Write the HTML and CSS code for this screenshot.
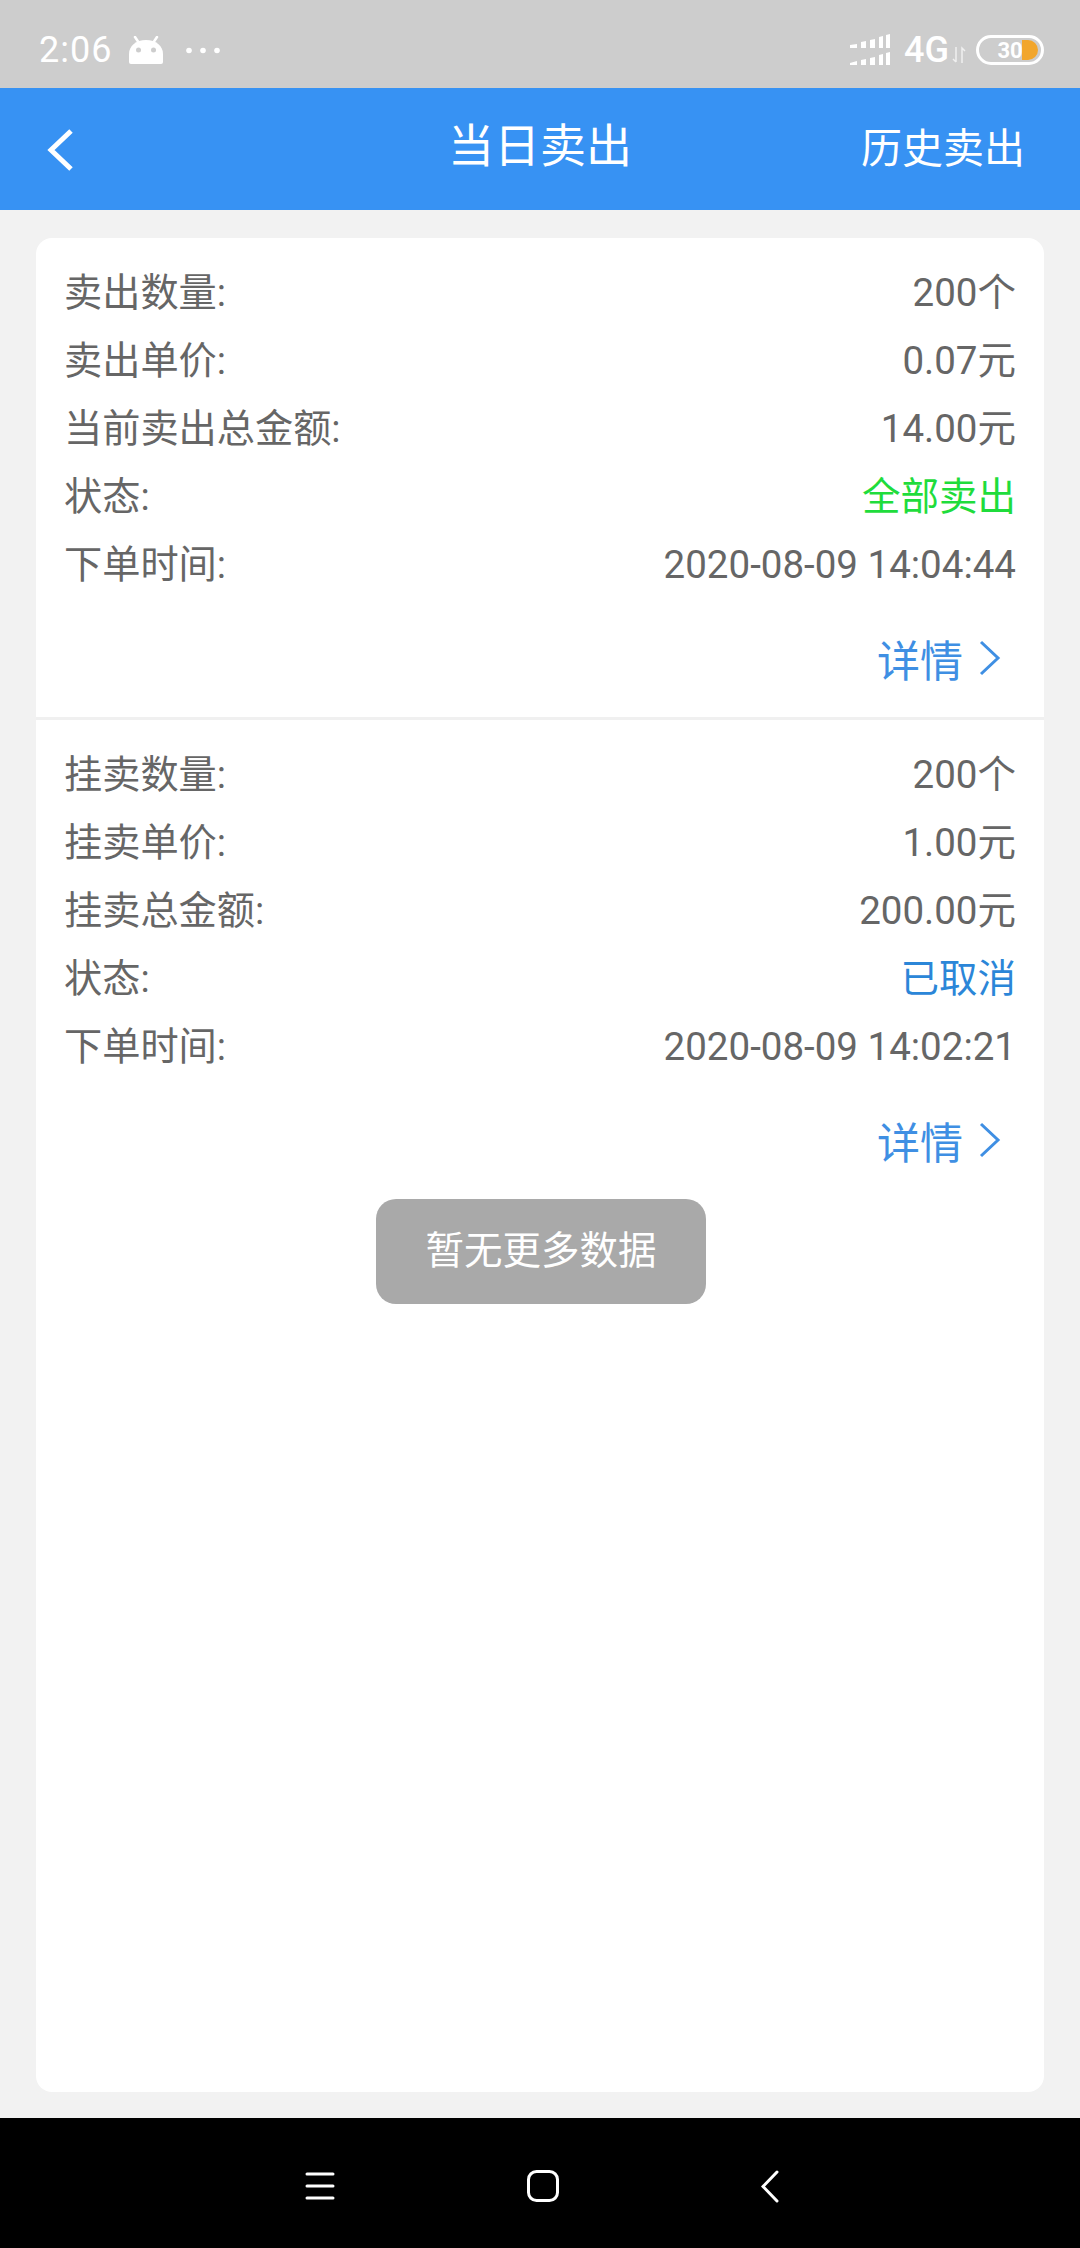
FILE: index.html
```html
<!DOCTYPE html>
<html lang="zh">
<head>
    <meta charset="UTF-8">
    <meta name="viewport" content="width=device-width, initial-scale=1.0">
    <title>当日卖出</title>
    <link rel="stylesheet" href="styles.css">
</head>
<body>
    <div class="status-bar">
        <div class="status-left">
            <span class="clock">2:06</span>
            <svg class="android" width="34" height="28" viewBox="0 0 34 28">
                <path d="M0 26V18C0 10 7 4 17 4s17 6 17 14v8a2 2 0 0 1-2 2H2a2 2 0 0 1-2-2z" fill="#fff"/>
                <path d="M6 1l4 6M28 1l-4 6" stroke="#fff" stroke-width="2.500" stroke-linecap="round"/>
                <circle cx="9.500" cy="14" r="2.500" fill="#cdcdcd"/>
                <circle cx="24.500" cy="14" r="2.500" fill="#cdcdcd"/>
            </svg>
            <svg class="dots" width="34" height="7" viewBox="0 0 34 7">
                <circle cx="3" cy="3.500" r="2.800" fill="#fff"/>
                <circle cx="17" cy="3.500" r="2.800" fill="#fff"/>
                <circle cx="31" cy="3.500" r="2.800" fill="#fff"/>
            </svg>
        </div>
        <div class="status-right">
            <svg width="40" height="32" viewBox="0 0 40 32" fill="#fff">
                <path d="M0 11l7-1v4H0zM11 8l5-1v7h-5zM20 6l5-1v9h-5zM29 3l4-1v12h-4zM36 1l4-1v14h-4z"/>
                <path d="M0 29l7-2v4H0zM11 26l5-1v6h-5zM20 24l5-1v8h-5zM29 21l4-1v11h-4zM36 19l4-1v13h-4z"/>
            </svg>
            <span class="network">4G</span>
            <svg class="updown" width="14" height="18" viewBox="0 0 14 18" fill="none" stroke="#fff" stroke-width="1.500" opacity="0.7">
                <path d="M4 1v15M1 13l3 3M10 17V2l3 3"/>
            </svg>
            <div class="battery">
                <span class="battery-fill"></span>
                <span class="battery-num">30</span>
            </div>
        </div>
    </div>

    <div class="header">
        <svg class="back" width="28" height="42" viewBox="0 0 28 42" fill="none" stroke="#fff" stroke-width="5">
            <path d="M25 2L5 21l20 19"/>
        </svg>
        <span class="title">当日卖出</span>
        <span class="history">历史卖出</span>
    </div>

    <div class="content">
        <div class="card">
            <div class="order">
                <div class="row"><span>卖出数量:</span><span>200个</span></div>
                <div class="row"><span>卖出单价:</span><span>0.07元</span></div>
                <div class="row"><span>当前卖出总金额:</span><span>14.00元</span></div>
                <div class="row"><span>状态:</span><span class="done">全部卖出</span></div>
                <div class="row"><span>下单时间:</span><span>2020-08-09 14:04:44</span></div>
                <div class="detail">
                    <span>详情</span>
                    <svg width="22" height="36" viewBox="0 0 22 36" fill="none" stroke="#3f8fe3" stroke-width="3"><path d="M2 2l17 16L2 34"/></svg>
                </div>
            </div>
            <div class="order">
                <div class="row"><span>挂卖数量:</span><span>200个</span></div>
                <div class="row"><span>挂卖单价:</span><span>1.00元</span></div>
                <div class="row"><span>挂卖总金额:</span><span>200.00元</span></div>
                <div class="row"><span>状态:</span><span class="cancelled">已取消</span></div>
                <div class="row"><span>下单时间:</span><span>2020-08-09 14:02:21</span></div>
                <div class="detail">
                    <span>详情</span>
                    <svg width="22" height="36" viewBox="0 0 22 36" fill="none" stroke="#3f8fe3" stroke-width="3"><path d="M2 2l17 16L2 34"/></svg>
                </div>
            </div>
            <div class="toast">暂无更多数据</div>
        </div>
    </div>

    <div class="nav-bar">
        <svg class="nav-menu" width="30" height="30" viewBox="0 0 30 30" stroke="#fff" stroke-width="3" stroke-linecap="round">
            <path d="M2 3h26M2 15h26M2 27h26"/>
        </svg>
        <svg class="nav-home" width="32" height="32" viewBox="0 0 32 32" fill="none" stroke="#fff" stroke-width="3">
            <rect x="1.500" y="1.500" width="29" height="29" rx="8"/>
        </svg>
        <svg width="18" height="33" viewBox="0 0 18 33" fill="none" stroke="#fff" stroke-width="3" stroke-linecap="round">
            <path d="M16 2L2 16.500 16 31"/>
        </svg>
    </div>
</body>
</html>
```

FILE: styles.css
```css
* {
    box-sizing: border-box;
}
html, body {
    margin: 0;
    padding: 0;
}
body {
    width: 1080px;
    height: 2248px;
    display: flex;
    flex-direction: column;
    font-family: Roboto, "Noto Sans CJK SC", sans-serif;
    background-color: #f2f2f2;
    overflow: hidden;
}
.status-bar {
    height: 88px;
    padding: 12px 36px 0 39px;
    display: flex;
    justify-content: space-between;
    align-items: center;
    background-color: #cdcdcd;
    color: #fff;
}
.status-left, .status-right {
    display: flex;
    align-items: center;
}
.clock {
    font-size: 36px;
    letter-spacing: 1px;
    width: 90px;
}
.dots {
    margin-left: 23px;
}
.network {
    font-size: 36px;
    font-weight: 500;
    margin-left: 14px;
}
.updown {
    margin: 10px 10px 0 3px;
}
.battery {
    position: relative;
    width: 68px;
    height: 30px;
    border: 3px solid #fff;
    border-radius: 15px;
    display: flex;
    align-items: center;
    justify-content: center;
}
.battery-num {
    position: relative;
    font-size: 22px;
    font-weight: 700;
}
.battery-fill {
    position: absolute;
    right: 3px;
    top: 2px;
    width: 16px;
    height: 20px;
    border-radius: 0 10px 10px 0;
    background-color: #f2a62c;
}
.header {
    position: relative;
    height: 122px;
    padding: 0 55px 0 46px;
    display: flex;
    justify-content: space-between;
    align-items: center;
    background-color: #3792f3;
    color: #fff;
}
.back {
    margin-top: 2px;
}
.title {
    position: absolute;
    left: 0;
    right: 0;
    text-align: center;
    font-size: 46px;
    line-height: 60px;
    top: 28px;
}
.history {
    font-size: 41px;
    margin-top: -8px;
}
.content {
    flex: 1;
    padding: 28px 36px 26px;
}
.card {
    position: relative;
    height: 100%;
    background-color: #fff;
    border-radius: 16px;
}
.order {
    padding: 21px 28px 0;
}
.order + .order {
    border-top: 3px solid #f0f0f0;
}
.row {
    height: 68px;
    line-height: 68px;
    display: flex;
    justify-content: space-between;
    font-size: 38.200px;
    color: #666;
}
.row span + span {
    font-size: 38.500px;
}
.done {
    color: #1fdc3c;
}
.cancelled {
    color: #2b86d8;
}
.detail {
    height: 118px;
    padding: 0 15px 0 0;
    display: flex;
    justify-content: flex-end;
    align-items: center;
    gap: 16px;
    font-size: 43px;
    color: #3f8fe3;
}
.toast {
    position: absolute;
    left: 340px;
    top: 961px;
    width: 330px;
    height: 105px;
    line-height: 103px;
    text-align: center;
    font-size: 38.500px;
    color: #fff;
    background-color: #a9a9a9;
    border-radius: 20px;
}
.nav-bar {
    height: 130px;
    padding: 6px 0 0 305px;
    display: flex;
    align-items: center;
    background-color: #000;
}
.nav-menu {
    margin-right: 192px;
}
.nav-home {
    margin-right: 202px;
}
```
